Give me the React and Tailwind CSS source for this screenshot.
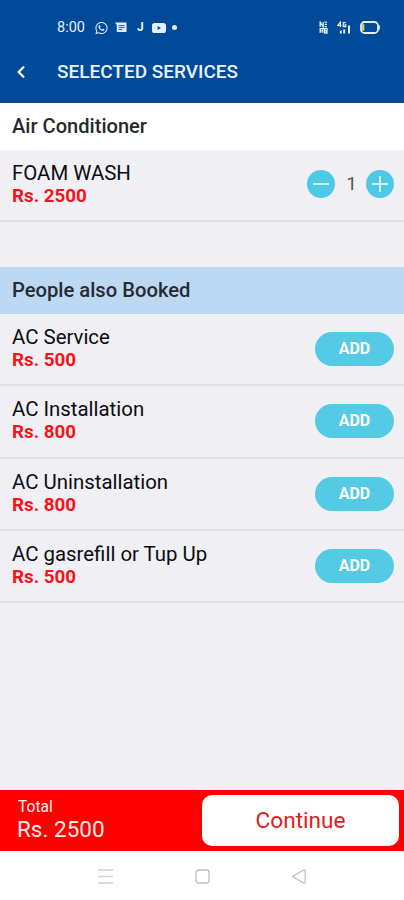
import { FaChevronLeft, FaWhatsapp } from 'react-icons/fa'

const suggestions = [
  { name: 'AC Service', price: 500 },
  { name: 'AC Installation', price: 800 },
  { name: 'AC Uninstallation', price: 800 },
  { name: 'AC gasrefill or Tup Up', price: 500 },
]

function StatusBar() {
  return (
    <div className="flex h-[55px] items-center pl-[57px] pr-[24px] text-[#e4effa]">
      <span className="w-[38px] text-[14.5px] leading-[14px]">8:00</span>
      <FaWhatsapp className="h-[14px] w-[13px]" />
      <svg className="ml-[7px] h-[11px] w-[12px]" viewBox="0 0 12 11">
        <path d="M0 0.5h11.5v9.5H1.8V3.2z" fill="currentColor" />
        <path d="M3.6 3.6h6M3.6 5.6h6M3.6 7.6h3.6" stroke="#004a99" strokeWidth="0.9" />
      </svg>
      <span className="ml-[10px] w-[6px] text-[12px] font-bold leading-[11px]">J</span>
      <svg className="ml-[9px] h-[10px] w-[14px]" viewBox="0 0 14 10">
        <rect width="14" height="10" rx="2.6" fill="currentColor" />
        <path d="M5.6 3l3.4 2-3.4 2z" fill="#004a99" />
      </svg>
      <span className="ml-[6px] h-[5px] w-[5px] rounded-full bg-current" />
      <svg className="ml-auto h-[13px] w-[9px]" viewBox="0 0 9 13" fill="none" stroke="currentColor" strokeWidth="1.3">
        <path d="M1.2 6V1l3 5V1M5.6 1.2H8M5.6 3.4H8M5.6 5.6H8M1.2 12V7.6h2.6V12M1.2 9.8h2.6M5.6 12V7.6H8V12zM5.6 9.8H8" />
      </svg>
      <svg className="ml-[9px] mr-px h-[13px] w-[15px]" viewBox="0 0 15 13" fill="none" stroke="currentColor">
        <path d="M3.4 6V1L0.8 4.4h3.6M8.8 1.6H6.2v4h2.6V3.8H7.4" strokeWidth="1.2" />
        <path d="M3.8 12.5v-3M7.2 12.5V8.4M12 12.5V4.5" strokeWidth="2" />
      </svg>
      <svg className="ml-[7px] h-[13px] w-[20px]" viewBox="0 0 20 13" fill="none">
        <rect x="1" y="1" width="17" height="11" rx="3.6" stroke="currentColor" strokeWidth="1.8" />
        <path d="M3.2 3.2v6.6" stroke="#e6cf6a" strokeWidth="2.2" />
        <path d="M19.2 4.4v4.2" stroke="currentColor" strokeWidth="1.4" />
      </svg>
    </div>
  )
}

function Header() {
  return (
    <header className="h-[103px] bg-[#004a99]">
      <StatusBar />
      <div className="flex h-[34px] items-center pl-[16px]">
        <FaChevronLeft className="h-[14px] w-[10px] text-white" />
        <h1 className="ml-[31px] text-[19px] font-medium leading-[22px] text-[#e9f2fb]">SELECTED SERVICES</h1>
      </div>
    </header>
  )
}

function ServiceRow({ name, price, children }) {
  return (
    <div className="flex h-[72.4px] items-center justify-between border-b-2 border-[#dfdfe4] pl-[12px] pr-[10px]">
      <div>
        <div className="text-[20.4px] leading-[23px] text-[#0c0c0e]">{name}</div>
        <div className="text-[18.8px] font-bold leading-[23px] text-[#f7131a]">Rs. {price}</div>
      </div>
      {children}
    </div>
  )
}

function RoundButton({ plus }) {
  return (
    <button className="flex h-[28px] w-[28px] items-center justify-center rounded-full bg-[#4ec9e5]">
      <svg className="h-[16px] w-[16px]" viewBox="0 0 16 16" stroke="#d3f2fa" strokeWidth="2">
        <path d={plus ? 'M0 8h16M8 0v16' : 'M0 8h16'} />
      </svg>
    </button>
  )
}

function Footer() {
  return (
    <footer className="flex h-[61px] items-center bg-[#fe0000] pl-[17px] pr-[5px]">
      <div className="flex-1 pb-[2px] text-[#ffecec]">
        <div className="pl-px text-[15.6px] leading-[20px]">Total</div>
        <div className="text-[22.5px] leading-[25px]">Rs. 2500</div>
      </div>
      <button className="h-[51px] w-[197px] rounded-[10px] bg-white text-[22.6px] text-[#e02020]">Continue</button>
    </footer>
  )
}

function NavBar() {
  return (
    <nav className="flex h-[49px] justify-center gap-[82px] bg-white pt-[18px]">
      <svg className="h-[15px] w-[15px]" viewBox="0 0 15 15" stroke="#cfcfcf" strokeWidth="1.3">
        <path d="M0 1h15M0 7.5h15M0 14h15" />
      </svg>
      <svg className="h-[15px] w-[15px]" viewBox="0 0 15 15" fill="none" stroke="#bdbdbd" strokeWidth="1.3">
        <rect x="1" y="1" width="13" height="13" rx="2.5" />
      </svg>
      <svg className="h-[15px] w-[15px]" viewBox="0 0 15 15" fill="none" stroke="#bdbdbd" strokeWidth="1.2" strokeLinejoin="round">
        <path d="M0.6 7.5L11.8 1c.8-.3 1.4 0 1.4.8v11.4c0 .8-.6 1.1-1.4.8z" />
      </svg>
    </nav>
  )
}

export default function App() {
  return (
    <div className="flex h-[900px] w-[404px] flex-col overflow-hidden bg-[#efeff4] font-[Roboto,sans-serif]">
      <Header />
      <h2 className="h-[47px] bg-white pl-[12px] text-[20.1px] font-medium leading-[47px] text-[#28282b]">
        Air Conditioner
      </h2>
      <ServiceRow name="FOAM WASH" price={2500}>
        <div className="flex items-center pb-[3px]">
          <RoundButton />
          <span className="w-[31px] pl-[2px] pt-px text-center text-[19px] text-[#55555a]">1</span>
          <RoundButton plus />
        </div>
      </ServiceRow>
      <h2 className="mt-[45px] h-[46.5px] bg-[#bdd8f3] pl-[12px] text-[20.2px] font-medium leading-[47px] text-[#262b30]">
        People also Booked
      </h2>
      {suggestions.map((s) => (
        <ServiceRow key={s.name} name={s.name} price={s.price}>
          <button className="h-[34px] w-[79px] rounded-full bg-[#55cae5] text-[16px] font-bold text-white">ADD</button>
        </ServiceRow>
      ))}
      <div className="flex-1" />
      <Footer />
      <NavBar />
    </div>
  )
}
